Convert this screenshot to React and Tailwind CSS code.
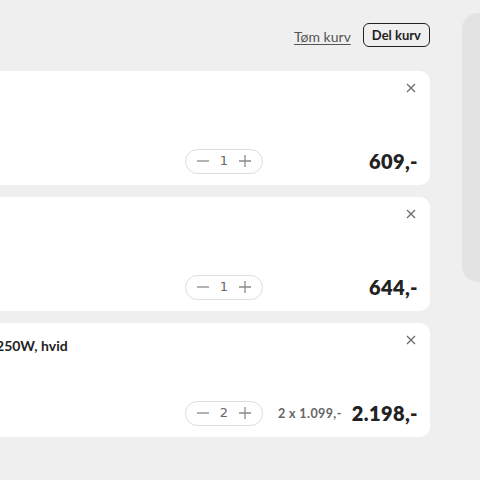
import React from "react";

const items = [
    { key: 1, title: "Philips Hue White Ambiance GU10 spot, 2-pak", qty: 1, unit: null, total: "609,-" },
    { key: 2, title: "Philips Hue Bridge, styreenhed til Hue-system", qty: 1, unit: null, total: "644,-" },
    { key: 3, title: "Philips Hue Go bordlampe med dæmper, 250W, hvid", qty: 2, unit: "2 x 1.099,-", total: "2.198,-" },
];

const Minus = () => (
    <svg width="14" height="14" viewBox="0 0 14 14" fill="none" stroke="#8a8a8a" strokeWidth="1.3">
        <path d="M1 7h12" />
    </svg>
);

const Plus = () => (
    <svg width="14" height="14" viewBox="0 0 14 14" fill="none" stroke="#8a8a8a" strokeWidth="1.3">
        <path d="M1 7h12M7 1v12" />
    </svg>
);

const Close = () => (
    <svg width="10" height="10" viewBox="0 0 10 10" fill="none" stroke="#6b6b6b" strokeWidth="1.3">
        <path d="M1 1l8 8M9 1l-8 8" />
    </svg>
);

const CartItem = ({ item }) => {
    return (
        <div className="h-[114px] bg-white rounded-[10px] flex flex-col pl-[20px] pr-[12px]">
            {/* Top row */}
            <div className="flex justify-between items-start pt-[12px]">
                {item.key === 3 ? (
                    <p className="text-[14px] font-bold text-[#222] ml-[122px]">{item.title}</p>
                ) : (
                    <span />
                )}
                <button className="w-[10px] h-[10px] flex items-center justify-center mr-[2px]">
                    <Close />
                </button>
            </div>
            {/* Bottom row */}
            <div className="flex justify-end items-center mt-auto mb-[9px]">
                <div className="w-[78px] h-[25px] shrink-0 border border-[#dedede] rounded-full flex items-center justify-between px-[10px]">
                    <Minus />
                    <span className="text-[13px] text-[#666] font-['DejaVu_Sans',sans-serif]">{item.qty}</span>
                    <Plus />
                </div>
                <div className="w-[155px] shrink-0 flex justify-end items-center gap-[10px]">
                    {item.unit && (
                        <span className="text-[12.5px] font-bold text-[#666] tracking-[0.4px] mt-[2px]">{item.unit}</span>
                    )}
                    <span className="text-[20px] font-extrabold text-[#222] tracking-[0.4px]">{item.total}</span>
                </div>
            </div>
        </div>
    );
};

export default function App() {
    return (
        <div className="w-[480px] h-[480px] overflow-hidden bg-[#efefef] font-['Lato',sans-serif]">
            <div className="flex gap-[32px] ml-[-400px]">
                {/* Cart column */}
                <div className="w-[830px] shrink-0 flex flex-col">
                    <div className="flex justify-end items-start gap-[12px] pt-[23px] h-[71px]">
                        <a className="text-[14px] text-[#555] underline underline-offset-2 mt-[3px]">Tøm kurv</a>
                        <button className="h-[24px] px-[8px] border-[1.5px] border-[#222] rounded-[6px] text-[13px] font-bold text-[#222] leading-none">
                            Del kurv
                        </button>
                    </div>
                    <div className="flex flex-col gap-[12px]">
                        {items.map((item) => (
                            <CartItem key={item.key} item={item} />
                        ))}
                    </div>
                </div>
                {/* Summary panel */}
                <div className="w-[300px] h-[269px] shrink-0 mt-[13px] bg-[#e3e3e3] rounded-[16px]"></div>
            </div>
        </div>
    );
}
